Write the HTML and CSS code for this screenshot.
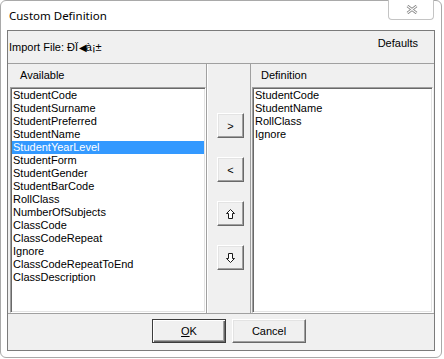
FILE: index.html
```html
<!DOCTYPE html>
<html>
<head>
<meta charset="utf-8">
<title>Custom Definition</title>
<link rel="stylesheet" href="styles.css">
</head>
<body>
<div class="window">
  <div class="titlebar">
    <span class="title">Custom Definition</span>
    <div class="close">
      <svg width="12" height="9" viewBox="0 0 12 9">
        <path d="M1.5 1 L10.5 8 M10.5 1 L1.5 8" stroke="#7a7a7a" stroke-width="2.8" fill="none"/>
        <path d="M1.5 1 L10.5 8 M10.5 1 L1.5 8" stroke="#fff" stroke-width="1.1" fill="none"/>
      </svg>
    </div>
  </div>
  <div class="client">
    <div class="header">
      <span class="import">Import File: ÐÏ<span class="tri">◀</span>à¡±</span>
      <span class="defaults">Defaults</span>
    </div>
    <div class="columns">
      <div class="col col-left">
        <div class="label">Available</div>
        <ul class="listbox lb-left">
          <li>StudentCode</li>
          <li>StudentSurname</li>
          <li>StudentPreferred</li>
          <li>StudentName</li>
          <li class="sel">StudentYearLevel</li>
          <li>StudentForm</li>
          <li>StudentGender</li>
          <li>StudentBarCode</li>
          <li>RollClass</li>
          <li>NumberOfSubjects</li>
          <li>ClassCode</li>
          <li>ClassCodeRepeat</li>
          <li>Ignore</li>
          <li>ClassCodeRepeatToEnd</li>
          <li>ClassDescription</li>
        </ul>
      </div>
      <div class="col col-mid">
        <button class="btn small">&gt;</button>
        <button class="btn small">&lt;</button>
        <button class="btn small">
          <svg width="9" height="10" viewBox="0 0 9 10"><path d="M4.5 0.5 L8.5 4.5 L6.5 4.5 L6.5 9.5 L2.5 9.5 L2.5 4.5 L0.5 4.5 Z" stroke="#1a1a1a" stroke-width="1" fill="#fff"/></svg>
        </button>
        <button class="btn small">
          <svg width="9" height="10" viewBox="0 0 9 10"><path d="M4.5 9.5 L8.5 5.5 L6.5 5.5 L6.5 0.5 L2.5 0.5 L2.5 5.5 L0.5 5.5 Z" stroke="#1a1a1a" stroke-width="1" fill="#fff"/></svg>
        </button>
      </div>
      <div class="col col-right">
        <div class="label">Definition</div>
        <ul class="listbox lb-right">
          <li>StudentCode</li>
          <li>StudentName</li>
          <li>RollClass</li>
          <li>Ignore</li>
        </ul>
      </div>
    </div>
    <div class="buttons">
      <button class="btn dlg default"><span><u>O</u>K</span></button>
      <button class="btn dlg">Cancel</button>
    </div>
  </div>
</div>
</body>
</html>
```
FILE: styles.css
```css
* { box-sizing: border-box; margin: 0; padding: 0; }
html, body { width: 444px; height: 359px; background: #fff; overflow: hidden; }
body { font-family: "Liberation Sans", Arial, sans-serif; font-size: 11px; color: #000; }

.window {
  width: 442px;
  height: 358px;
  border: 1px solid #a9a9a9;
  border-radius: 6px;
  background: #fff;
  display: flex;
  flex-direction: column;
}

.titlebar {
  height: 29px;
  display: flex;
  justify-content: space-between;
  align-items: flex-start;
}
.title {
  font-family: "Noto Sans", "Liberation Sans", sans-serif;
  font-size: 11.5px;
  line-height: 16px;
  margin-top: 7px;
  padding-left: 8px;
  color: #000;
}
.close {
  width: 46px;
  height: 20px;
  margin-top: -1px;
  margin-right: 7px;
  border: 1px solid #c4c4c4;
  border-top: none;
  border-radius: 0 0 4px 4px;
  background: #fff;
  display: flex;
  align-items: center;
  justify-content: center;
  padding-left: 1px;
}

.client {
  margin-left: 6px;
  width: 428px;
  height: 321px;
  border: 1px solid #7b7b7b;
  background: #f0f0f0;
  display: flex;
  flex-direction: column;
}

.header {
  height: 33px;
  flex: none;
  border-bottom: 1px solid #a0a0a0;
  display: flex;
  justify-content: space-between;
  align-items: flex-start;
  padding-left: 1px;
  padding-right: 16px;
}
.import { margin-top: 10px; line-height: 13px; }
.tri { font-family: "DejaVu Sans", sans-serif; font-size: 10px; margin: 0 -1px 0 1px; }
.defaults { margin-top: 6px; line-height: 13px; }

.columns {
  height: 250px;
  flex: none;
  display: flex;
  border-bottom: 1px solid #a0a0a0;
}
.col { height: 249px; }
.col-left {
  width: 199px;
  border-right: 1px solid #a0a0a0;
  padding-left: 2px;
}
.col-mid {
  width: 44px;
  border-right: 1px solid #a0a0a0;
  border-left: 1px solid #fff;
  padding-top: 49px;
  padding-left: 9px;
  display: flex;
  flex-direction: column;
  gap: 19px;
}
.col-right {
  width: 183px;
  padding-left: 1px;
}
.label { height: 23px; line-height: 23px; }
.col-left .label { padding-left: 10px; }
.col-right .label { padding-left: 9px; }

.listbox {
  list-style: none;
  height: 226px;
  background: #fff;
  border: 1px solid;
  border-color: #a0a0a0 #fff #fff #a0a0a0;
  box-shadow: inset 1px 1px 0 #696969, inset -1px -1px 0 #e3e3e3;
  padding: 1px;
  overflow: hidden;
}
.lb-left { width: 196px; }
.lb-right { width: 181px; }
.listbox li {
  height: 13px;
  line-height: 13px;
  padding-left: 1px;
  white-space: nowrap;
}
.listbox li.sel { background: #3399ff; color: #fff; }

.btn {
  background: #f0f0f0;
  border: 1px solid;
  border-color: #fff #696969 #696969 #fff;
  box-shadow: inset -1px -1px 0 #a0a0a0, inset 1px 1px 0 #e3e3e3;
  font: inherit;
  color: #000;
  display: flex;
  align-items: center;
  justify-content: center;
}
.small { width: 27px; height: 25px; flex: none; }

.buttons {
  flex: 1;
  display: flex;
  gap: 6px;
  padding-top: 5px;
  padding-left: 144px;
}
.dlg { width: 74px; height: 24px; }
.default {
  border-color: #3c3c3c;
  box-shadow: inset 1px 1px 0 #fff, inset -1px -1px 0 #696969, inset -2px -2px 0 #a0a0a0;
}
```
